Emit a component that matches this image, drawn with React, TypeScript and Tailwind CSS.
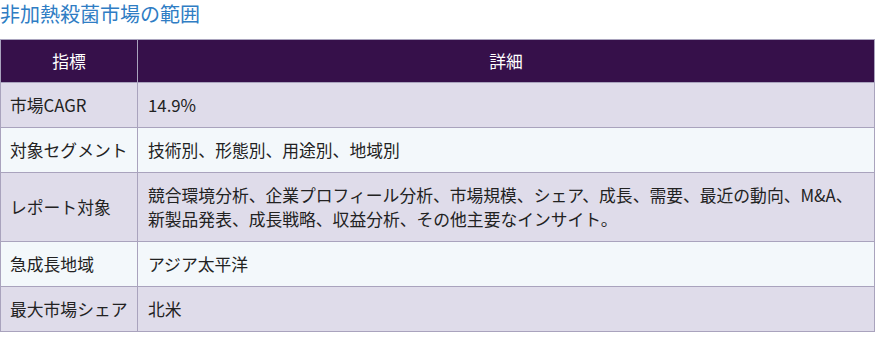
import React from "react";

const rows: { k: string; v: React.ReactNode }[] = [
  { k: "市場CAGR", v: "14.9%" },
  { k: "対象セグメント", v: "技術別、形態別、用途別、地域別" },
  {
    k: "レポート対象",
    v: (
      <>
        <span className="block whitespace-nowrap">
          競合環境分析、企業プロフィール分析、市場規模、シェア、成長、需要、最近の動向、M&amp;A、
        </span>
        <span className="block whitespace-nowrap">新製品発表、成長戦略、収益分析、その他主要なインサイト。</span>
      </>
    ),
  },
  { k: "急成長地域", v: "アジア太平洋" },
  { k: "最大市場シェア", v: "北米" },
];

export default function App() {
  return (
    <div
      className="w-[880px] h-[337px] bg-white overflow-hidden"
      style={{ fontFamily: '"Noto Sans CJK JP", "Noto Sans", sans-serif' }}
    >
      <h2 className="text-[20px] leading-[28px] text-[#2f7dc4] h-[39px]">非加熱殺菌市場の範囲</h2>
      <table className="w-[875px] border-collapse table-fixed text-[16.8px] leading-[24px] text-[#222]">
        <colgroup>
          <col className="w-[137px]" />
          <col />
        </colgroup>
        <thead>
          <tr className="bg-[#36104a] text-white">
            <th className="border border-[#a9a3bd] py-[9px] font-normal text-center">指標</th>
            <th className="border border-[#a9a3bd] py-[9px] font-normal text-center">詳細</th>
          </tr>
        </thead>
        <tbody>
          {rows.map((r, i) => (
            <tr key={i} className={i % 2 === 0 ? "bg-[#dfdcea]" : "bg-[#f3f8fb]"}>
              <td className="border border-[#a9a3bd] px-[9px] py-[10px] align-middle whitespace-nowrap">{r.k}</td>
              <td className="border border-[#a9a3bd] px-[10px] py-[10px] align-middle">{r.v}</td>
            </tr>
          ))}
        </tbody>
      </table>
    </div>
  );
}
